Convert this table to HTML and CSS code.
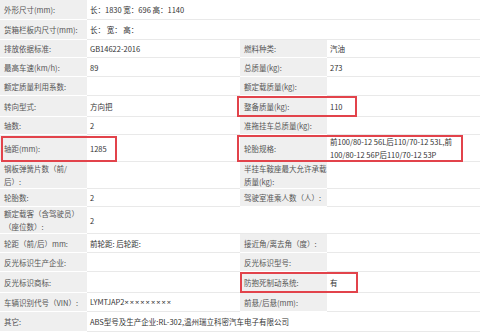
FILE: index.html
```html
<!DOCTYPE html>
<html lang="zh-CN">
<head>
<meta charset="utf-8">
<title>车辆参数</title>
<link rel="stylesheet" href="styles.css">
</head>
<body>
<div class="sheet">
  <table class="spec">
    <colgroup>
      <col class="c-label"><col class="c-val"><col class="c-label"><col class="c-val">
    </colgroup>
    <tr class="h20"><th>外形尺寸(mm):</th><td colspan="3">长：1830 宽：696 高：1140</td></tr>
    <tr class="h20"><th>货箱栏板内尺寸(mm):</th><td colspan="3">长： 宽： 高：</td></tr>
    <tr class="h18"><th>排放依据标准:</th><td>GB14622-2016</td><th>燃料种类:</th><td>汽油</td></tr>
    <tr class="h19"><th>最高车速(km/h):</th><td>89</td><th>总质量(kg):</th><td>273</td></tr>
    <tr class="h19"><th>额定质量利用系数:</th><td></td><th>额定载质量(kg):</th><td></td></tr>
    <tr class="h21"><th>转向型式:</th><td>方向把</td><th>整备质量(kg):</th><td>110</td></tr>
    <tr class="h18"><th>轴数:</th><td>2</td><th>准拖挂车总质量(kg):</th><td></td></tr>
    <tr class="h27"><th>轴距(mm):</th><td>1285</td><th>轮胎规格:</th><td>前100/80-12 56L后110/70-12 53L,前100/80-12 56P后110/70-12 53P</td></tr>
    <tr class="h27"><th>钢板弹簧片数（前/后）:</th><td></td><th>半挂车鞍座最大允许承载质量(kg):</th><td></td></tr>
    <tr class="h18"><th>轮胎数:</th><td>2</td><th>驾驶室准乘人数（人）:</th><td></td></tr>
    <tr class="h27"><th>额定载客（含驾驶员）（座位数）:</th><td colspan="3">2</td></tr>
    <tr class="h19"><th>轮距（前/后）mm:</th><td>前轮距: 后轮距:</td><th>接近角/离去角（度）:</th><td></td></tr>
    <tr class="h19"><th>反光标识生产企业:</th><td></td><th>反光标识型号:</th><td></td></tr>
    <tr class="h21"><th>反光标识商标:</th><td></td><th>防抱死制动系统:</th><td>有</td></tr>
    <tr class="h19"><th>车辆识别代号（VIN）:</th><td>LYMTJAP2<span class="latin">×××××××××</span></td><th>前悬/后悬(mm):</th><td></td></tr>
    <tr class="h20"><th>其它:</th><td colspan="3">ABS型号及生产企业:RL-302,温州瑞立科密汽车电子有限公司</td></tr>
  </table>
  <div class="mark mark-wheelbase"></div>
  <div class="mark mark-curb"></div>
  <div class="mark mark-tire"></div>
  <div class="mark mark-abs"></div>
</div>
</body>
</html>
```
FILE: styles.css
```css
html, body {
  margin: 0;
  padding: 0;
  background: #ffffff;
}

.sheet {
  position: relative;
  width: 480px;
  height: 332px;
  overflow: hidden;
  font-family: "Noto Sans CJK SC", "Noto Sans", sans-serif;
  font-size: 7.5px;
  line-height: 13px;
}

.spec {
  width: 480px;
  table-layout: fixed;
  border-collapse: separate;
  border-spacing: 0;
}

.c-label { width: 87px; }
.c-val { width: 153px; }

.spec th,
.spec td {
  vertical-align: middle;
  text-align: left;
  font-weight: normal;
}

.spec th {
  padding: 0 0 0 4px;
  background: #efefef;
  color: #555555;
  border-bottom: 1px solid #ffffff;
  word-break: break-all;
}

.spec th:first-child {
  padding-right: 5px;
}

.spec td {
  padding: 0 10px 0 3px;
  background: #ffffff;
  color: #333333;
  border-bottom: 1px solid #e9e9e9;
}

.latin {
  font-family: "Noto Sans", sans-serif;
  letter-spacing: 1px;
}

.h18 { height: 18px; }
.h19 { height: 19px; }
.h20 { height: 20px; }
.h21 { height: 21px; }
.h27 { height: 27px; }

.mark {
  position: absolute;
  box-sizing: border-box;
  border: 2px solid #e2434b;
}

.mark-wheelbase { left: 1px; top: 136px; width: 116px; height: 26px; }
.mark-curb { left: 237px; top: 96px; width: 120px; height: 21px; }
.mark-tire { left: 237px; top: 135px; width: 226px; height: 27px; }
.mark-abs { left: 240px; top: 272px; width: 118px; height: 21px; }
```
